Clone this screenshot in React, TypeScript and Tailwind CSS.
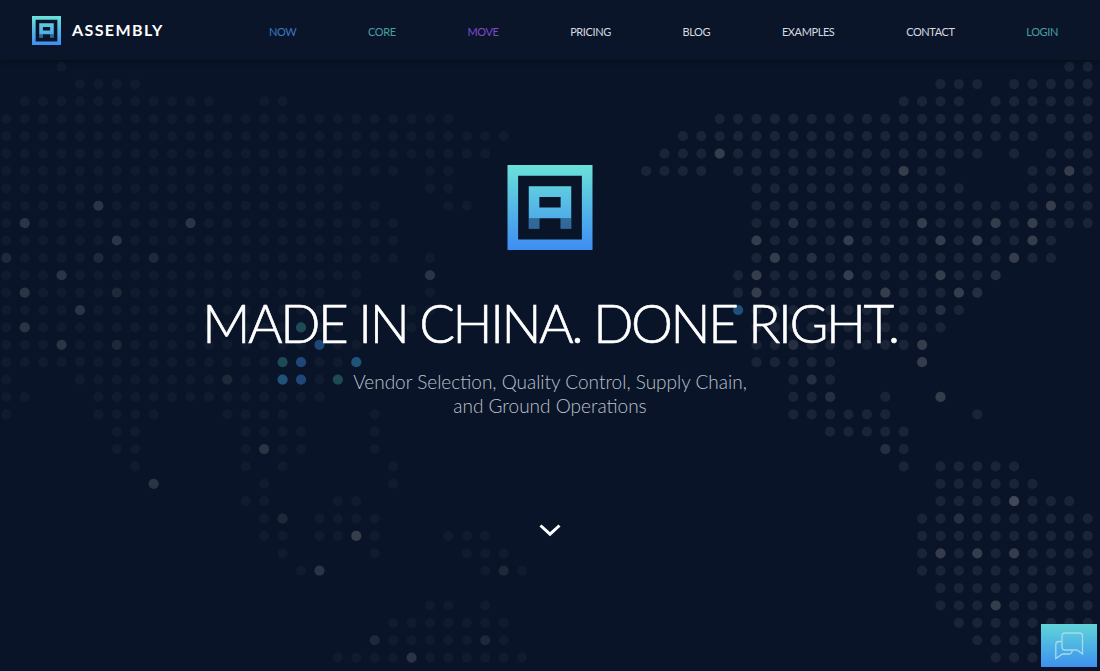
import React from 'react';

// dot map: o faint, m medium, M bright, O brightest, b blue, s steel, t teal
const leftRows = [
  '...o',
  '....oooo',
  '.ooooooooooo..oo',
  'ooooooooooooooooooooooooo',
  'oooooooooooooooooooooooooooo',
  'ooooooooooooooooooooooooooo',
  'oooooooooooooooooooooo.oo',
  'ooooooooooooooooooo....oo',
  'oooooMooooooooooooooo...oo',
  'oMooooooooMooooooooooo',
  'ooooooMooooooooooooooo',
  'moooomoomooooooooooooo.o',
  'oooMoooooooooooooooo...M',
  'oMoooomooooooooooo.o...o',
  'ooooMooooooooooooo.o..oo',
  'oMoooooooooooooot' + 'oo...o',
  'oooMoomooooooooooboo',
  'ooooooooooooooo' + 'tb' + 'oo' + 's',
  'o...oooooooomoosbot',
  'oo...ooooooooooooo',
  'o....oooo...oooo....o',
  '......oo.....oooo...o',
  '......oo.....oMoo...o',
  '.......o.....o.o.....o',
  '........M.....o......o',
  '.............oo...oo',
  '..............om.oooo',
  '..............oo.ooOo...ooo',
  '...............o....o....ooo',
  '................oM........omo',
  '',
  '.......................oo.o',
  '.....................ooooooo',
  '....................mooooomo',
  '..................ooooMoooooo',
];

const rightRows = [
  '.......................oo',
  '................ooo.ooooo',
  '..............oooo.oooooo',
  '....ooooooooooooooooooooo',
  '..oooooooooooooooooooo.oo',
  '.oooMoooooooooooooo.o.ooo',
  'oooo.oooooooooMoo....ooMo',
  '......oooooooooooo...oooo',
  '......ooooooooooooooooMoo',
  '......oomooooooMoooMoMooo',
  '......MooooMooooMoMooMo',
  '......oMomooooooooooMoo',
  '.....oMooooMooooMoom',
  '.....oMooooooMoooMm',
  '.....boooooooooomo',
  '......ooooooooooo',
  '......oomooooooM',
  '......ooooo....M',
  '........omo',
  '........oom..o..M',
  '........oooooo....o',
  '..........ooooo',
  '.............mo',
  '..............o.ooooo',
  '................oooooo',
  '................ooooOooo',
  '...............oomooooooo',
  '...............oooooooooo',
  '...............oMoMoMoooo',
  '...............oooooooooo',
  '................ooooooooo',
  '................oooMooooo',
  '.................oooooooo',
  '..................ooooooo',
  '...................ooo',
];

const rowY = (j: number) => 66.7 + j * 17.38;

const leftFill: Record<string, string> = {
  o: '#101b2e',
  m: '#1e2839',
  M: '#2b3444',
  O: '#363e4d',
  b: '#1f4678',
  s: '#1f5478',
  t: '#1c4a57',
};
const rightFill: Record<string, string> = {
  o: '#1a2436',
  m: '#262f41',
  M: '#353d4c',
  O: '#40485a',
  b: '#1f4e78',
};

const DotMap = () => (
  <svg className="absolute inset-0 w-full h-full" viewBox="0 0 1100 671">
    {leftRows.map((row, j) =>
      row.split('').map((c, i) =>
        c === '.' ? null : <circle key={`l${j}-${i}`} cx={6.3 + i * 18.42} cy={rowY(j)} r={5.1} fill={leftFill[c]} />,
      ),
    )}
    {rightRows.map((row, j) =>
      row.split('').map((c, k) =>
        c === '.' ? null : <circle key={`r${j}-${k}`} cx={646.1 + k * 18.4} cy={rowY(j)} r={5.1} fill={rightFill[c]} />,
      ),
    )}
  </svg>
);

const Logo = ({ id, className }: { id: string; className: string }) => (
  <svg className={className} viewBox="0 0 8 8">
    <defs>
      <linearGradient id={id} x1="0" y1="0" x2="0" y2="8" gradientUnits="userSpaceOnUse">
        <stop offset="0" stopColor="#6ae2da" />
        <stop offset="1" stopColor="#3f8df2" />
      </linearGradient>
    </defs>
    <path
      fill={`url(#${id})`}
      fillRule="evenodd"
      d="M0 0H8V8H0ZM1 1V7H7V1ZM2 2H6V6H5V5H3V6H2ZM3 3V4H5V3Z"
    />
    <rect x="2" y="5" width="1" height="1" fill="#0a1428" opacity="0.42" />
    <rect x="5" y="5" width="1" height="1" fill="#0a1428" opacity="0.42" />
  </svg>
);

const links = [
  { label: 'NOW', color: 'text-[#3a78c0]' },
  { label: 'CORE', color: 'text-[#4a9ea3]' },
  { label: 'MOVE', color: 'text-[#7d4ac9]' },
  { label: 'PRICING', color: 'text-[#d5d9e0]' },
  { label: 'BLOG', color: 'text-[#d5d9e0]' },
  { label: 'EXAMPLES', color: 'text-[#d5d9e0]' },
  { label: 'CONTACT', color: 'text-[#d5d9e0]' },
  { label: 'LOGIN', color: 'text-[#4a9ea3]' },
];

export default function App() {
  return (
    <div className="relative h-screen w-full overflow-hidden bg-[#0a1428] font-['Lato',sans-serif]">
      <DotMap />

      <header className="relative z-10 flex h-[60px] items-center bg-[#0b1529] pl-[32px] pr-[42px] shadow-[0_2px_6px_rgba(0,0,0,0.3)]">
        <div className="flex items-center gap-[11px]">
          <Logo id="logo-small" className="h-[29px] w-[29px]" />
          <span className="text-[16px] font-bold leading-none tracking-[1.4px] text-white">ASSEMBLY</span>
        </div>
        <nav className="ml-auto mt-[2px] flex w-[789px] items-center justify-between">
          {links.map((link) => (
            <a key={link.label} className={`text-[11px] leading-none tracking-[-0.4px] ${link.color}`}>
              {link.label}
            </a>
          ))}
        </nav>
      </header>

      <main className="relative z-10 flex flex-col items-center">
        <Logo id="logo-large" className="mt-[105px] h-[85px] w-[86px]" />
        <h1 className="mt-[46px] text-[53px] font-light leading-[54px] tracking-[-2.45px] whitespace-nowrap text-white [-webkit-text-stroke:0.6px_white]">
          MADE IN CHINA. DONE RIGHT.
        </h1>
        <p className="mt-[20px] text-center text-[19px] font-light leading-[24px] text-[#bcc2cc]">
          Vendor Selection, Quality Control, Supply Chain,
          <br />
          and Ground Operations
        </p>
        <svg className="mt-[105px] h-[14px] w-[22px]" viewBox="0 0 22 14" fill="none">
          <path d="M1.5 2.5L11 11.2L20.5 2.5" stroke="#ffffff" strokeWidth="3" />
        </svg>
      </main>

      <button className="absolute right-[3px] top-[624px] z-20 flex h-[43px] w-[56px] items-center justify-center bg-gradient-to-b from-[#62d4d8] to-[#3f90ee]">
        <svg width="29" height="28" viewBox="0 0 29 28" fill="none" stroke="#a3dde8" strokeWidth="1.3">
          <path d="M10 1H24.5A3 3 0 0 1 27.5 4V22L22 18H10A3 3 0 0 1 7 15V4A3 3 0 0 1 10 1Z" />
          <path d="M7 9.5H3.5A3 3 0 0 0 .8 12.5V26.5L7.5 22H14A3 3 0 0 0 17 18.2" />
        </svg>
      </button>
    </div>
  );
}
